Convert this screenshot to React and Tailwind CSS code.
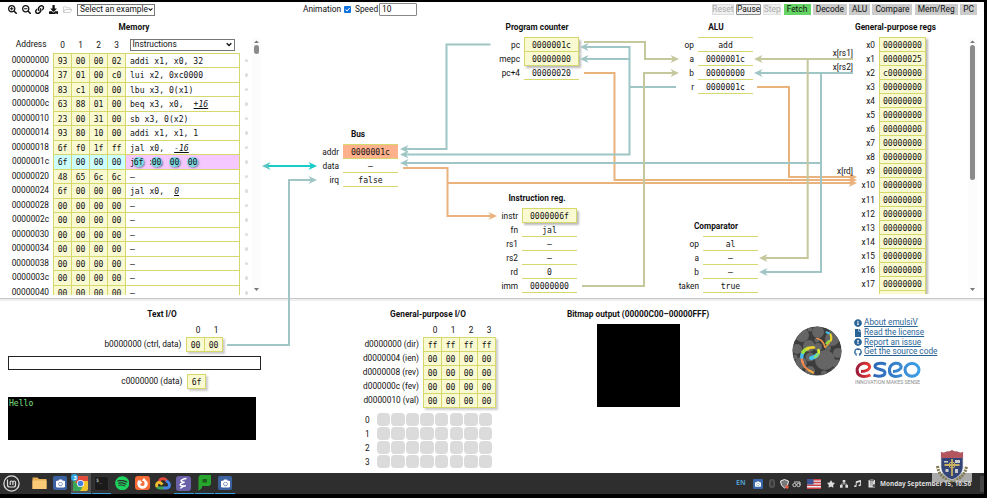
import React from "react";
import {
  FaSearchPlus, FaSearchMinus, FaLink, FaDownload, FaRegFolderOpen, FaInfoCircle,
  FaFile, FaExclamationCircle, FaGithub, FaSpotify, FaStar, FaMusic, FaCamera, FaFirefoxBrowser,
} from "react-icons/fa";

const MONO = "font-['DejaVu_Sans_Mono',monospace] text-[8.1px]";
const LINE = "border-[#d6d86c]";
const TEAL = "#9fc5c5";
const OLIVE = "#c5c79d";
const ORANGE = "#eab27c";

const memory = [
  ["00000000", "93 00 00 02", "addi x1, x0, 32"],
  ["00000004", "37 01 00 c0", "lui x2, 0xc0000"],
  ["00000008", "83 c1 00 00", "lbu x3, 0(x1)"],
  ["0000000c", "63 88 01 00", "beq x3, x0,", "+16"],
  ["00000010", "23 00 31 00", "sb x3, 0(x2)"],
  ["00000014", "93 80 10 00", "addi x1, x1, 1"],
  ["00000018", "6f f0 1f ff", "jal x0,", "-16"],
  ["0000001c", "6f 00 00 00", "jal x0,", "0"],
  ["00000020", "48 65 6c 6c", "–"],
  ["00000024", "6f 00 00 00", "jal x0,", "0"],
  ["00000028", "00 00 00 00", "–"],
  ["0000002c", "00 00 00 00", "–"],
  ["00000030", "00 00 00 00", "–"],
  ["00000034", "00 00 00 00", "–"],
  ["00000038", "00 00 00 00", "–"],
  ["0000003c", "00 00 00 00", "–"],
  ["00000040", "00 00 00 00", "–"],
];

function Title({ children, className = "" }) {
  return <h2 className={`h-[14px] whitespace-nowrap text-center text-[8.3px] font-bold leading-[14px] ${className}`}>{children}</h2>;
}

function Chevron() {
  return (
    <svg width="6" height="5" viewBox="0 0 6 5"><path d="M.7 1.2 3 3.5 5.300 1.200" fill="none" stroke="#111" strokeWidth="1.300" /></svg>
  );
}

/* Labelled stack of register values; "on" rows are the stateful ones. */
function Fields({ rows, labelWidth }) {
  return (
    <div className="flex">
      <div className={`${labelWidth} shrink-0 pr-[4px] text-right`}>
        {rows.map(([l]) => <div key={l} className="h-[14.06px] leading-[14px]">{l}</div>)}
      </div>
      <div className={`w-[55px] ${MONO}`}>
        {rows.map(([l, v, fill], i) => (
          <div
            key={l}
            className={`h-[14.06px] border-b text-center leading-[15.5px] ${LINE} ${
              fill === "on" ? "border-x bg-[#fafad2]" : fill === "hot" ? "bg-[#ffb08c]" : ""
            } ${fill === "on" && i > 0 ? "shadow-[2px_2px_2px_#bbb]" : ""} ${i === 0 && fill !== "on" ? "shadow-[0_-1px_0_#d6d86c]" : ""} ${
              i === 0 && fill === "on" ? "shadow-[0_-1px_0_#d6d86c,2px_2px_2px_#bbb]" : ""
            }`}
          >
            {v}
          </div>
        ))}
      </div>
    </div>
  );
}

function Scrollbar({ thumb }) {
  return (
    <div className="flex h-[254px] w-[9px] flex-col items-center bg-[#fcfcfc]">
      <svg className="shrink-0" width="5" height="7" viewBox="0 0 5 7"><path d="M0 5 2.500 2.500 5 5z" fill="#777" /></svg>
      <div className={`w-[5px] rounded-full bg-[#8b8b8b] ${thumb}`} />
      <svg className="mt-auto shrink-0" width="5" height="7" viewBox="0 0 5 7"><path d="M0 3h5L2.500 6z" fill="#777" /></svg>
    </div>
  );
}

function MemoryTable() {
  return (
    <section className="flex w-[262px] flex-col pt-[2px]">
      <Title className="w-[268px]">Memory</Title>
      <div className="flex">
        <div className="w-[252px]">
          <div className="flex h-[18.500px] items-center pt-[3px]">
            <div className="w-[53.500px] pr-[7px] text-right text-[8.400px]">Address</div>
            {[0, 1, 2, 3].map((n) => <div key={n} className="w-[18px] text-center">{n}</div>)}
            <div className="ml-[4px] flex h-[12px] w-[105px] items-center justify-between border border-[#767676] px-[2px] text-[8.400px]">
              Instructions<Chevron />
            </div>
          </div>
          <div className="h-[242px] overflow-hidden">
            {memory.map(([addr, bytes, ins, imm]) => {
              const cur = addr === "0000001c";
              return (
                <div key={addr} className="flex h-[14.540px] leading-[15px]">
                  <div className="w-[53px] pr-[4px] text-right">{addr}</div>
                  <div className={`flex w-[187px] border-l border-t ${LINE} ${MONO} leading-[15px]`}>
                    {bytes.split(" ").map((b, i) => (
                      <div key={i} className={`w-[18px] shrink-0 border-r text-center ${LINE} ${cur ? "bg-[#ccffff]" : "bg-[#fafad2]"}`}>{b}</div>
                    ))}
                    <div className={`relative flex-1 whitespace-pre border-r pl-[4px] ${LINE} ${cur ? "bg-[#f5c8ff]" : ""}`}>
                      {ins}
                      {imm && <span className="ml-[10px] italic underline">{imm}</span>}
                      {cur && (
                        <div className="absolute left-[7px] top-[2px] flex gap-[7px]">
                          {["6f", "00", "00", "00"].map((b, i) => (
                            <span key={i} className="h-[10px] w-[11px] rounded-full bg-[#7fdbe6] text-center leading-[11px] shadow-[1px_1px_2px_#8888a8]">{b}</span>
                          ))}
                        </div>
                      )}
                    </div>
                  </div>
                  <div className="ml-[4.500px] mt-[6px] h-[3.500px] w-[3.500px] rounded-full bg-[#ddd]" />
                </div>
              );
            })}
          </div>
        </div>
        <div className="pt-[4px]"><Scrollbar thumb="h-[9px]" /></div>
      </div>
    </section>
  );
}

function Wires() {
  const heads = [
    [400, 149, 180, TEAL], [400, 154.500, 180, TEAL], [400, 163, 180, TEAL],
    [580, 47, 180, TEAL], [580, 59, 180, TEAL], [754, 73, 180, TEAL], [759, 272, 180, TEAL], [317, 180, 0, TEAL],
    [754, 59, 180, OLIVE], [759, 258, 180, OLIVE], [679, 59, 0, OLIVE], [679, 73, 0, OLIVE],
    [857, 177, 0, ORANGE], [857, 180, 0, ORANGE], [857, 183, 0, ORANGE], [497, 216, 0, ORANGE],
    [262, 166, 180, "#5bc5c2"], [317, 166, 0, "#18cdc9"],
  ];
  return (
    <svg className="pointer-events-none absolute left-0 top-0" width="984" height="471" viewBox="0 2 984 471">
      <g fill="none" strokeWidth="2">
        <g stroke={ORANGE}>
          <path d="M584 73H614.500V180H852M403 168H447.500V183H852M447.500 183V216H491M757 87H789V177H852" />
        </g>
        <g stroke={TEAL}>
          <path d="M490.500 44.500H446.500V149H405M676 87H629.500M585 47H629.500V154.500H405M585 59H629.500M853 73H759M821 73V272H764M821 163H405M227 345H289V180H312" />
        </g>
        <g stroke={OLIVE}>
          <path d="M853 59H759M807.700 59V258H764M584 42H645V59H674M582 286H644V73H674" />
        </g>
        <path d="M267 166H312" stroke="#18cdc9" />
      </g>
      {heads.map(([x, y, r, c], i) => (
        <path key={i} d="M0 0-8.500-4-6 0-8.500 4z" fill={c} transform={`translate(${x} ${y}) rotate(${r})`} />
      ))}
      <g fontSize="8.300" textAnchor="end" fill="#111">
        <text x="853" y="55.700">x[rs1]</text>
        <text x="853" y="69.700">x[rs2]</text>
        <text x="853" y="173.700">x[rd]</text>
      </g>
    </svg>
  );
}

function Header() {
  const btn = "flex h-[11px] items-center justify-center whitespace-nowrap text-[8.400px]";
  const steps = [["Decode", "w-[34px]"], ["ALU", "w-[21px]"], ["Compare", "w-[40px]"], ["Mem/Reg", "w-[43px]"], ["PC", "w-[17px]"]];
  return (
    <header className="flex h-[16px] items-center pb-[1px] pl-[8px] pr-[7px]">
      <div className="flex w-[69px] items-center gap-[4.500px] text-[9.200px]">
        <FaSearchPlus /><FaSearchMinus /><FaLink /><FaDownload /><FaRegFolderOpen className="text-[#c4c4c4]" />
      </div>
      <div className="flex h-[12px] w-[78px] items-center justify-between whitespace-nowrap border border-[#767676] pl-[2px] pr-px text-[8.400px]">
        Select an example<Chevron />
      </div>
      <div className="ml-[148px] flex items-center">
        <span className="w-[41px] text-[8.400px]">Animation</span>
        <svg width="7" height="7" viewBox="0 0 7 7"><rect width="7" height="7" rx="1" fill="#1273de" /><path d="m1.500 3.500 1.500 1.500 2.700-3" fill="none" stroke="#fff" /></svg>
        <span className="ml-[4px] w-[24px]">Speed</span>
        <div className="flex h-[13px] w-[38px] items-center rounded-[1px] border border-[#888] pl-[2px] text-[8.400px]">10</div>
      </div>
      <div className="ml-auto flex gap-[2.300px]">
        <div className={`${btn} w-[22.500px] border border-[#ddd] bg-[#f0f0f0] text-[#aaa]`}>Reset</div>
        <div className={`${btn} w-[24.500px] rounded-[1px] border border-[#888] bg-[#efefef]`}>Pause</div>
        <div className={`${btn} w-[18px] border border-[#e2e2e2] bg-[#f0f0f0] text-[#aaa]`}>Step</div>
        <div className={`${btn} w-[27px] bg-[#66d365]`}>Fetch</div>
        {steps.map(([s, w]) => <div key={s} className={`${btn} ${w} bg-[#cbcbcb]`}>{s}</div>)}
      </div>
    </header>
  );
}

function Bytes({ rows }) {
  return (
    <div className={`w-fit border-l border-t ${LINE} ${MONO} shadow-[2px_2px_2px_#ccc]`}>
      {rows.map((r, j) => (
        <div key={j} className="flex">
          {r.split(" ").map((b, i) => (
            <div key={i} className={`h-[14.060px] w-[18px] border-b border-r bg-[#fafad2] text-center leading-[15px] ${LINE}`}>{b}</div>
          ))}
        </div>
      ))}
    </div>
  );
}

function TextIO() {
  return (
    <section className="w-[324px] pt-[8px]">
      <Title>Text I/O</Title>
      <div className="ml-[189px] mt-[2px] flex h-[14px] leading-[15px]">
        <span className="w-[18px] text-center">0</span><span className="w-[18px] text-center">1</span>
      </div>
      <div className="flex leading-[15px]">
        <div className="w-[186px] pr-[4.500px] text-right">b0000000 (ctrl, data)</div>
        <Bytes rows={["00 00"]} />
      </div>
      <div className="ml-[8px] mt-[4px] h-[14px] w-[253px] border border-[#222]" />
      <div className="mt-[4px] flex leading-[15px]">
        <div className="w-[187px] pr-[4.500px] text-right">c0000000 (data)</div>
        <Bytes rows={["6f"]} />
      </div>
      <div className={`ml-[8px] mt-[8px] h-[43px] w-[248px] bg-black pl-[1px] pt-[1px] leading-[11px] text-[#7fe07f] ${MONO}`}>Hello</div>
    </section>
  );
}

function Gpio() {
  const labels = ["d0000000 (dir)", "d0000004 (ien)", "d0000008 (rev)", "d000000c (fev)", "d0000010 (val)"];
  return (
    <section className="w-[208px] pt-[8px]">
      <Title>General-purpose I/O</Title>
      <div className="ml-[102px] mt-[2px] flex h-[14px] leading-[15px]">
        {[0, 1, 2, 3].map((n) => <span key={n} className="w-[18px] text-center">{n}</span>)}
      </div>
      <div className="flex">
        <div className="w-[99px] pr-[4px] text-right">
          {labels.map((l) => <div key={l} className="h-[14.060px] leading-[15px]">{l}</div>)}
        </div>
        <Bytes rows={["ff ff ff ff", "00 00 00 00", "00 00 00 00", "00 00 00 00", "00 00 00 00"]} />
      </div>
      <div className="ml-[41px] mt-[4.500px]">
        {[0, 1, 2, 3].map((n) => (
          <div key={n} className="flex h-[14.060px] items-center gap-[1.100px]">
            <span className="w-[10.500px]">{n}</span>
            {Array.from({ length: 8 }, (_, i) => <i key={i} className="h-[13px] w-[13.500px] rounded-[4px] bg-[#dbdbdb]" />)}
          </div>
        ))}
      </div>
    </section>
  );
}

function EmulsivLogo() {
  const bubbles = [[10, 9, 7], [26, 6, 6], [40, 13, 7], [46, 27, 5], [33, 34, 10], [17, 20, 6], [5, 23, 5], [9, 37, 6], [18, 45, 5], [45, 38, 4.500], [36, 22, 3], [25, 14, 2.500], [32, 47.500, 3], [3, 31, 2.500], [18, 3, 2.500], [26, 21, 4], [40, 4, 3], [18, 31, 4.500], [42, 45, 3]];
  return (
    <svg width="50" height="50" viewBox="0 0 50 50">
      <defs><clipPath id="disc"><circle cx="25" cy="25" r="24.500" /></clipPath></defs>
      <g clipPath="url(#disc)">
        <circle cx="25" cy="25" r="25" fill="#3c3c3c" />
        {bubbles.map(([x, y, r], i) => <circle key={i} cx={x} cy={y} r={r} fill="#656565" />)}
      </g>
      <g fill="none" strokeLinecap="round">
        <path d="M10 35c1 5 5 9 11 11.500" stroke="#f0854a" strokeWidth="2" />
        <path d="M17 44.500 21 46.500" stroke="#f0b53a" strokeWidth="1.800" />
        <path d="M9.800 29Q9 33 11 37" stroke="#f08a55" strokeWidth="2.400" />
        <path d="M11 26.500Q9.800 28.500 9.800 31" stroke="#3fbdf0" strokeWidth="3.500" />
        <path d="M16 22.500Q12.500 23.500 11 26" stroke="#9fe040" strokeWidth="3.800" />
        <path d="M22 21.500Q18.500 21 15 23" stroke="#f0d030" strokeWidth="2.600" />
        <path d="M26.500 24Q27.500 27 25 30" stroke="#d9ec30" strokeWidth="2.600" />
        <path d="M25 29Q23 31.500 19 32" stroke="#41c5ef" strokeWidth="4" />
        <path d="M25.500 28Q24.500 30 23 31" stroke="#8ee068" strokeWidth="2.500" />
        <path d="M25 12.500Q31 13.500 33 21" stroke="#f0904a" strokeWidth="1.700" />
        <path d="M33 21Q36 19.500 39 14" stroke="#f0a83a" strokeWidth="1.300" />
        <path d="M34.500 17.500 37 15" stroke="#8fe043" strokeWidth="2.400" />
        <path d="M39 14.500Q40 11 38.500 8.500" stroke="#e8d52f" strokeWidth="2.200" />
        <path d="M34.500 6.200 37 7.200" stroke="#43c4f0" strokeWidth="2" />
      </g>
    </svg>
  );
}

function EseoLogo() {
  return (
    <svg width="68" height="24" viewBox="0 0 68 24">
      <defs>
        <linearGradient id="eseo-e" x1="0" x2="1"><stop offset="0" stopColor="#9d1c3c" /><stop offset="1" stopColor="#ec3c35" /></linearGradient>
        <linearGradient id="eseo-seo" gradientUnits="userSpaceOnUse" x1="18" x2="66" y1="0" y2="0"><stop offset="0" stopColor="#2e65b4" /><stop offset="1" stopColor="#3ea2e8" /></linearGradient>
      </defs>
      <path d="M6 10.500C11 10.500 15.500 8.500 14.500 5 13 .8 4.500 1 2.300 7.500 1 14.500 7.500 17.500 15.500 14" fill="none" stroke="url(#eseo-e)" strokeWidth="3" />
      <g fill="none" stroke="url(#eseo-seo)" strokeWidth="3">
        <path d="M31 3.300c-5-1.800-11-1-11 2 0 4 10 2.500 10 6.200 0 4.300-7 4.300-11.500 2.700" />
        <path d="M38 10.500C42 10.500 47 8.500 46 5 44.500 .8 36.500 1 34.600 7.500 33.500 14.500 39 17.500 47 14" />
        <ellipse cx="57" cy="8.800" rx="7" ry="6.400" />
      </g>
      <text x="0" y="23.300" fontSize="6.200" textLength="65" lengthAdjust="spacingAndGlyphs" fill="#8d8d8d">INNOVATION MAKES SENSE</text>
    </svg>
  );
}

function Lower() {
  const links = [[FaInfoCircle, "About emulsiV"], [FaFile, "Read the license"], [FaExclamationCircle, "Report an issue"], [FaGithub, "Get the source code"]];
  return (
    <div className="flex h-[175px] border-t border-[#c8c8c8] shadow-[inset_0_2px_1px_#eee]">
      <TextIO />
      <Gpio />
      <section className="flex w-[212px] flex-col items-center pt-[8px]">
        <Title>Bitmap output (00000C00–00000FFF)</Title>
        <div className="mt-[3px] h-[83px] w-[83px] bg-black" />
      </section>
      <section className="flex pl-[48px] pt-[19px]">
        <div className="mt-[8px]"><EmulsivLogo /></div>
        <div className="ml-[12px]">
          {links.map(([Icon, t]) => (
            <a key={t} className="flex h-[9.800px] items-center gap-[2px] whitespace-nowrap text-[8.250px] leading-[9.800px] text-[#2a6496]">
              <Icon className="text-[8px]" /><span className="underline">{t}</span>
            </a>
          ))}
          <div className="ml-[1px] mt-[4px]"><EseoLogo /></div>
        </div>
      </section>
    </div>
  );
}

function CameraTile() {
  return <div className="flex h-[14px] w-[14px] items-center justify-center rounded-[2px] bg-[#3c62a0] text-[9px] text-white"><FaCamera /></div>;
}

function Slot({ children, open, active }) {
  return (
    <div className={`flex h-[21px] w-[19.500px] items-center justify-center border-b ${open ? "border-[#38a0dc]" : "border-transparent"} ${active ? "bg-[#505050]" : ""}`}>{children}</div>
  );
}

function Taskbar() {
  return (
    <footer className="relative flex h-[21px] w-[984px] items-center bg-[#2e2e2e] text-[#ddd]">
      <svg className="ml-[2.500px]" width="17" height="17" viewBox="0 0 17 17" fill="none" stroke="#ddd">
        <circle cx="8.500" cy="8.500" r="7.600" strokeWidth="1.300" /><path d="M4.500 4.500V10q0 2 2 2h4q2 0 2-2V7.500q0-1.500-1.300-1.500T9.900 7.500V10M9.900 7.500Q9.900 6 8.500 6T7.200 7.500V10" strokeWidth="1.200" />
      </svg>
      <div className="ml-[10.500px] flex gap-[1.100px]">
        <Slot><svg width="15" height="14" viewBox="0 0 15 14"><path d="M.5 1.500h5l1.500 1.500h7.500V13H.5z" fill="#e9ae55" /><path d="M.5 4.500h14V13H.5z" fill="#f8ca78" /></svg></Slot>
        <Slot><CameraTile /></Slot>
        <Slot open active>
          <div className="relative">
            <svg width="15" height="15" viewBox="0 0 15 15">
              <rect width="15" height="15" rx="2" fill="#f3c52c" /><path d="M0 2Q0 0 2 0h11q2 0 2 2v3H7.500L4 8z" fill="#e24a3b" /><path d="M0 3v10q0 2 2 2h5l3-5-5-1z" fill="#38a455" />
              <circle cx="7.500" cy="7.500" r="3.600" fill="#fff" /><circle cx="7.500" cy="7.500" r="2.800" fill="#447fe0" />
            </svg>
            <span className="absolute -left-[2px] -top-[2px] h-[7px] w-[7px] rounded-full bg-[#2ea3df] text-center text-[6px] font-bold leading-[7px] text-white">3</span>
          </div>
        </Slot>
        <Slot open><div className="h-[15px] w-[15px] rounded-[2px] border border-[#333] bg-[#1b1b1b] pl-[1px] font-['DejaVu_Sans_Mono',monospace] text-[5px] leading-[6px]">$_</div></Slot>
        <Slot><FaSpotify className="text-[14.500px] text-[#1fd35f]" /></Slot>
        <Slot><div className="flex h-[14.500px] w-[14.500px] items-center justify-center rounded-[3px] bg-[#f56a35] text-[11px] text-white"><FaFirefoxBrowser /></div></Slot>
        <Slot>
          <svg width="16" height="13" viewBox="0 0 16 13" fill="none" strokeWidth="2.800">
            <path d="M4 5Q5 1.600 8 1.600q2.500 0 3.800 2.400" stroke="#e34a3a" /><path d="M11 4q3.500 1 3.500 4 0 3-3 3H8" stroke="#4684e8" /><path d="M8.500 11H4.500q-1.300 0-2.300-1" stroke="#39a356" /><path d="M2.200 10Q.8 7.800 2.500 6q1.800-1.600 5 1.500" stroke="#f3bd2d" />
          </svg>
        </Slot>
        <Slot open><svg width="15" height="15" viewBox="0 0 15 15"><rect width="15" height="15" rx="3" fill="#6a60a8" /><path d="M10.500 2.500Q6 3 5 4.800q0 1.200 3.500 1.500Q4 7.500 4.200 9q.5 1 5.500.8Q5 11 4.500 12.500" fill="none" stroke="#fff" strokeWidth="1.400" /></svg></Slot>
        <Slot open><svg width="13" height="16" viewBox="0 0 13 16"><path d="M2 0h11v9.500L11 11H4v2l-3.500 3V2z" fill="#27a52c" /><path d="M4.500 4h4.500v3.500H4.500z" fill="#1b5d1d" /></svg></Slot>
        <Slot open><CameraTile /></Slot>
      </div>
      <div className="ml-auto flex items-center pr-[10px]">
        <span className="w-[17px] -translate-x-[-3px] font-['Noto_Sans',sans-serif] text-[7px] font-bold text-[#4f9ac8]">EN</span>
        <div className="ml-[3px] flex h-[10px] w-[10px] items-center justify-center rounded-[1px] bg-[#3b66aa] text-[6px] text-white"><FaCamera /></div>
        <svg className="ml-[6px]" width="6" height="9" viewBox="0 0 6 9"><rect width="6" height="9" rx="3" fill="#565656" /><path d="m1.500 3 3 3L3 7.500v-6L4.500 3l-3 3" fill="none" stroke="#222" strokeWidth=".6" /></svg>
        <svg className="ml-[5px]" width="9" height="10" viewBox="0 0 9 10"><path d="M4.500.5 8.500 2q0 5-4 7-4-2-4-7z" fill="#777" stroke="#eee" /><circle cx="7" cy="8" r="1.700" fill="#e65b3d" /></svg>
        <svg className="ml-[3px]" width="9" height="8" viewBox="0 0 9 8" fill="none" stroke="#ccc"><circle cx="2.500" cy="5" r="1.700" /><circle cx="6.500" cy="5" r="1.700" /><path d="M2 2h6V5" /></svg>
        <svg className="ml-[6px]" width="14" height="10" viewBox="0 0 14 10"><path d="M0 0h14v10H0z" fill="#eee" /><path d="M0 .7h14M0 3.500h14M0 6.300h14M0 9.200h14" stroke="#cc4146" strokeWidth="1.400" /><path d="M0 0h6.500v5.500H0z" fill="#3d5393" /></svg>
        <FaStar className="ml-[6px] text-[8px]" />
        <svg className="ml-[5px]" width="8" height="8" viewBox="0 0 8 8" fill="#ddd"><path d="M2.700 0h2.600v2.500H2.700zM0 5h2.600v2.700H0zM5.400 5H8v2.700H5.400z" /><path d="M4 2v2M1.300 5V4h5.400v1" fill="none" stroke="#ddd" strokeWidth=".7" /></svg>
        <FaMusic className="ml-[6px] text-[7px]" />
        <svg className="ml-[6.500px]" width="8" height="9" viewBox="0 0 8 9"><path d="M.5 1h6.500v7.500H.5z" fill="#ddd" /><path d="M2 0h3.500v2H2zM2 4h3M2 6h1.500" fill="#888" stroke="#555" strokeWidth=".7" /><circle cx="6" cy="6.500" r="1.500" fill="#555" /></svg>
        <span className="ml-[4.500px] w-[94px] whitespace-nowrap font-['Noto_Sans',sans-serif] text-[6.400px] font-bold">Monday September 15, 16:56</span>
      </div>
      <div className="absolute right-0 top-[3px] h-[16px] w-[4px] bg-[#454545]" />
      <div className="absolute left-[932px] top-0 h-[9px] w-[40px] bg-[#d4d4d4]/75" />
      <svg className="absolute left-[936px] top-[-24px]" width="32" height="34" viewBox="0 0 32 34">
        <path d="M1.500 17Q3 29 16 32 29 29 30.500 17" fill="none" stroke="#7f7a50" strokeWidth="3" strokeDasharray="2 1" />
        <path d="M5 3q3 1.500 6-.5Q14 3 16 1q2 2 5 1.500 3 2 6 .5v16q-1 8-11 12Q6 27 5 19z" fill="#334476" stroke="#ddd" strokeWidth=".7" />
        <path d="M5 3q3 1.500 6-.5Q14 3 16 1q2 2 5 1.500 3 2 6 .5v6H5z" fill="#b3565f" />
        <path d="M16 10v17M8.500 16h15" stroke="#c7b061" strokeWidth="1.800" /><circle cx="16" cy="16" r="3" fill="none" stroke="#c7b061" />
        <path d="M8 12h4v1.500H8zM19 11h5v3h-5zM19 20h3v4h-3zM9.500 20h3v3h-3z" fill="#ccc" />
        <path d="M9 32q7-3 14 0" fill="none" stroke="#bbb" />
      </svg>
    </footer>
  );
}

export default function App() {
  return (
    <div className="h-[498px] w-[987px] overflow-hidden bg-black pt-[2px] font-['Roboto',sans-serif] text-[8.300px] text-[#111]">
      <main className="relative h-[471px] w-[984px] bg-white">
        <Header />
        <div className="flex h-[280px] overflow-hidden">
          <MemoryTable />
          <section className="w-[137px] pt-[109px]">
            <Title className="ml-[55px]">Bus</Title>
            <div className="mt-[4px]">
              <Fields labelWidth="w-[81px]" rows={[["addr", "0000001c", "hot"], ["data", "–"], ["irq", "false"]]} />
            </div>
          </section>
          <section className="w-[181px] pt-[2px]">
            <Title className="ml-[96px] w-[84px]">Program counter</Title>
            <div className="mt-[4px]">
              <Fields labelWidth="w-[125px]" rows={[["pc", "0000001c", "on"], ["mepc", "00000000", "on"], ["pc+4", "00000020"]]} />
            </div>
            <Title className="ml-[96px] mt-[111px] w-[84px]">Instruction reg.</Title>
            <div className="mt-[4px]">
              <Fields labelWidth="w-[123px]" rows={[["instr", "0000006f", "on"], ["fn", "jal"], ["rs1", "–"], ["rs2", "–"], ["rd", "0"], ["imm", "00000000"]]} />
            </div>
          </section>
          <section className="w-[240px] pt-[2px]">
            <Title className="ml-[94px] w-[84px]">ALU</Title>
            <div className="mt-[4px]">
              <Fields labelWidth="w-[118px]" rows={[["op", "add"], ["a", "0000001c"], ["b", "00000000"], ["r", "0000001c"]]} />
            </div>
            <Title className="ml-[94px] mt-[125px] w-[84px]">Comparator</Title>
            <div className="mt-[4px]">
              <Fields labelWidth="w-[123px]" rows={[["op", "al"], ["a", "–"], ["b", "–"], ["taken", "true"]]} />
            </div>
          </section>
          <section className="w-[160px] pt-[2px]">
            <Title className="ml-[30px] w-[91px]">General-purpose regs</Title>
            <div className="mt-[3px] flex">
              <div className="flex h-[257px] w-[148px] overflow-hidden">
                <div className="w-[59px] pr-[4px] pt-[1px] text-right">
                  {Array.from({ length: 18 }, (_, i) => <div key={i} className="h-[14.060px] leading-[14px]">{`x${i}`}</div>)}
                </div>
                <div className={`h-[300px] w-[47px] border-x border-t bg-[#fafad2] shadow-[2px_2px_2px_#bbb] ${LINE} ${MONO}`}>
                  {Array.from({ length: 18 }, (_, i) => (
                    <div key={i} className={`h-[14.060px] border-b text-center leading-[15.5px] ${LINE}`}>
                      {i === 1 ? "00000025" : i === 2 ? "c0000000" : "00000000"}
                    </div>
                  ))}
                </div>
              </div>
              <div className="pt-[1px]"><Scrollbar thumb="h-[135px]" /></div>
            </div>
          </section>
        </div>
        <Lower />
        <Wires />
      </main>
      <Taskbar />
    </div>
  );
}
